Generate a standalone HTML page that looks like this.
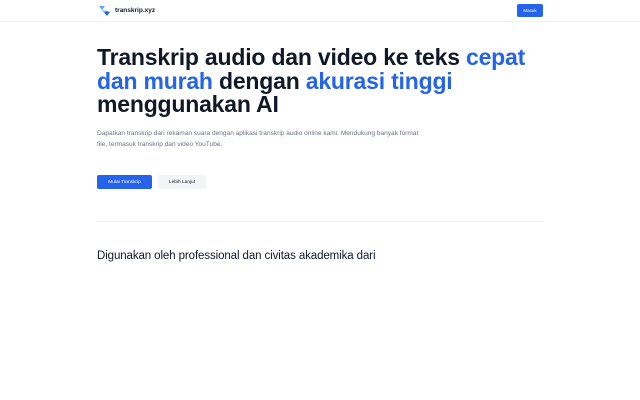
<!DOCTYPE html>
<html><head><meta charset="utf-8"><style>
*{margin:0;padding:0;box-sizing:border-box}
body{width:640px;height:400px;background:#fff;font-family:"Liberation Sans",sans-serif;color:#111827;position:relative;overflow:hidden}
.hdr{position:absolute;left:0;top:0;width:640px;height:22px;border-bottom:1px solid #eef0f3}
.logo{position:absolute;left:98px;top:5px}
.brand{position:absolute;left:115px;top:7px;font-size:6.5px;font-weight:bold;color:#111827}
.masuk{position:absolute;left:517px;top:4px;width:26px;height:13px;background:#2563eb;border-radius:2px;color:#fff;font-size:4.5px;text-align:center;line-height:13px}
h1{position:absolute;left:97px;top:46px;width:445px;font-size:23px;line-height:23.5px;font-weight:bold;letter-spacing:-0.2px;color:#111827}
h1 span{color:#2563eb}
p{position:absolute;left:97px;top:128px;width:360px;font-size:6.55px;line-height:11px;color:#6b7280;white-space:nowrap}
.b1{position:absolute;left:97px;top:175px;width:55px;height:14px;background:#2563eb;border-radius:2px;color:#fff;font-size:4.8px;text-align:center;line-height:15px}
.b2{position:absolute;left:158px;top:175px;width:48px;height:14px;background:#f3f4f6;border-radius:2px;color:#111827;font-size:4.8px;text-align:center;line-height:15px}
.hr{position:absolute;left:97px;top:221px;width:446px;height:1px;background:#eceef1}
h2{position:absolute;left:97px;top:250px;font-size:11.5px;font-weight:normal;color:#111827;letter-spacing:-0.1px}
</style></head><body>
<div class="hdr"></div>
<svg class="logo" width="14" height="12" viewBox="0 0 14 12"><path d="M1 1 L7 1 L4 5 Z" fill="#60a5fa"/><path d="M4 5 L12 7 L9 11 Z" fill="#2563eb"/><path d="M3 4 L8 6 L6 8 Z" fill="#93c5fd"/></svg>
<div class="brand">transkrip.xyz</div>
<div class="masuk">Masuk</div>
<h1>Transkrip audio dan video ke teks <span>cepat dan murah</span> dengan <span>akurasi tinggi</span> menggunakan AI</h1>
<p>Dapatkan transkrip dari rekaman suara dengan aplikasi transkrip audio online kami. Mendukung banyak format<br>file, termasuk transkrip dari video YouTube.</p>
<div class="b1">Mulai Transkrip</div>
<div class="b2">Lebih Lanjut</div>
<div class="hr"></div>
<h2>Digunakan oleh professional dan civitas akademika dari</h2>
</body></html>
